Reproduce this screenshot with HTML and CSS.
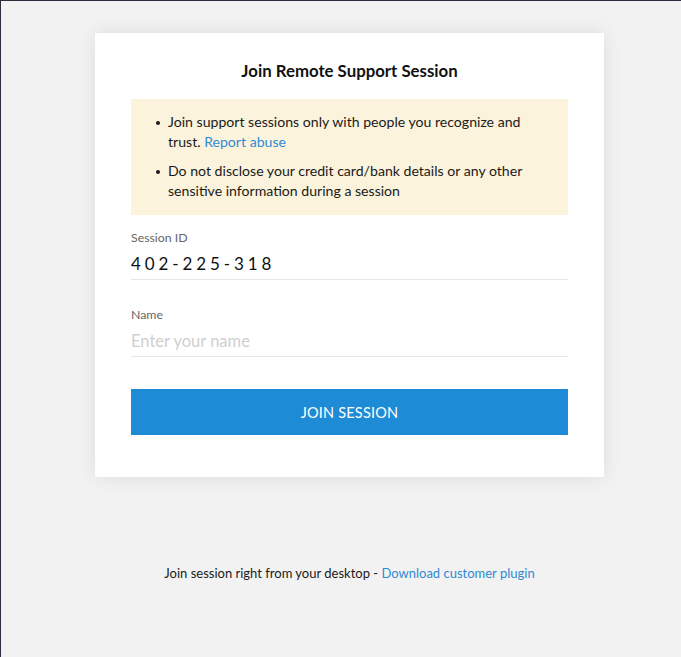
FILE: index.html
```html
<!DOCTYPE html>
<html>
<head>
<meta charset="utf-8">
<link rel="stylesheet" href="styles.css">
</head>
<body>
<div class="page">
  <div class="card">
    <h1 class="title">Join Remote Support Session</h1>
    <div class="notice">
      <ul class="notice-list">
        <li><span>Join support sessions only with people you recognize and trust. <a class="link" href="#">Report abuse</a></span></li>
        <li><span>Do not disclose your credit card/bank details or any other sensitive information during a session</span></li>
      </ul>
    </div>
    <div class="field">
      <label class="field-label">Session ID</label>
      <div class="field-value">402-225-318</div>
    </div>
    <div class="field field-name">
      <label class="field-label">Name</label>
      <input class="field-input" type="text" placeholder="Enter your name">
    </div>
    <button class="btn">JOIN SESSION</button>
  </div>
  <p class="footer">Join session right from your desktop - <a class="link" href="#">Download customer plugin</a></p>
</div>
</body>
</html>
```
FILE: styles.css
```css
html, body {
  margin: 0;
  padding: 0;
  height: 100%;
  overflow: hidden;
}
body {
  background: #f2f2f2;
  border-left: 1px solid #2c2e3b;
  border-top: 1px solid #2c2e3b;
  box-sizing: border-box;
  font-family: Lato, "Noto Sans", sans-serif;
  color: #111;
}
.page {
  padding-left: 17px;
  padding-top: 32px;
  display: flex;
  flex-direction: column;
  align-items: center;
}
.card {
  width: 509px;
  box-sizing: border-box;
  background: #fff;
  padding: 28px 36px 42px 36px;
  box-shadow: 0 0 18px rgba(0,0,0,0.09);
}
.title {
  margin: 0 0 18px;
  font-size: 16.8px;
  line-height: 20px;
  font-weight: 700;
  text-align: center;
  color: #111;
}
.notice {
  background: #fbf3dc;
  padding: 13px 20px 14px 25px;
}
.notice-list {
  margin: 0;
  padding: 0;
  list-style: none;
  font-size: 14.1px;
  line-height: 20px;
  color: #1a1a1a;
}
.notice-list li {
  display: grid;
  grid-template-columns: 12px 1fr;
}
.notice-list li::before {
  content: "";
  width: 4px;
  height: 4px;
  border-radius: 50%;
  background: #1a1a1a;
  margin-top: 9px;
}
.notice-list li + li {
  margin-top: 9px;
}
.link {
  color: #2f8ad4;
  text-decoration: none;
}
.field {
  margin-top: 15px;
  border-bottom: 1px solid #e6e6e6;
}
.field-name {
  margin-top: 27px;
}
.field-label {
  display: block;
  font-size: 12.3px;
  line-height: 16px;
  color: #666;
}
.field-value {
  font-size: 17px;
  letter-spacing: 3.9px;
  line-height: 24px;
  padding: 6px 0 3px;
  color: #111;
}
.field-input {
  display: block;
  width: 100%;
  border: none;
  outline: none;
  padding: 6px 0 3px;
  font-family: Lato, "Noto Sans", sans-serif;
  font-size: 16.5px;
  line-height: 24px;
  color: #111;
  background: transparent;
}
.field-input::placeholder {
  color: #cfcfcf;
}
.btn {
  display: block;
  width: 100%;
  margin-top: 32px;
  height: 46px;
  border: none;
  background: #1e8bd6;
  color: #fff;
  font-family: Lato, "Noto Sans", sans-serif;
  font-size: 14.5px;
  letter-spacing: 0.2px;
}
.footer {
  margin: 87px 0 0;
  font-size: 13px;
  line-height: 18px;
  color: #1a1a1a;
}
```
